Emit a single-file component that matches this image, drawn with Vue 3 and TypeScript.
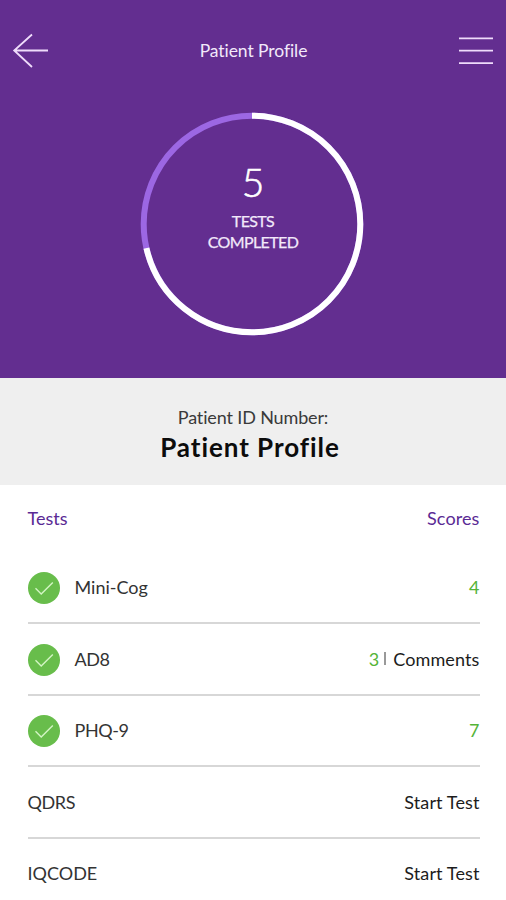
<script setup lang="ts">
interface TestRow {
  id: string
  name: string
  score?: number
  comments?: boolean
}

const tests: TestRow[] = [
  { id: 'minicog', name: 'Mini-Cog', score: 4 },
  { id: 'ad8', name: 'AD8', score: 3, comments: true },
  { id: 'phq', name: 'PHQ-9', score: 7 },
  { id: 'qdrs', name: 'QDRS' },
  { id: 'iqcode', name: 'IQCODE' },
]
</script>

<template>
  <main class="screen">
    <section class="hero">
      <header class="bar">
        <svg class="back" width="36" height="36" viewBox="0 0 36 36">
          <path d="M20 1.5 2.2 17.5 20 34M2.2 17.5H36" />
        </svg>
        <h1 class="bar-title">Patient Profile</h1>
        <svg class="menu" width="34" height="30" viewBox="0 0 34 30">
          <path d="M0 2.3H34M0 14.6H34M0 27.2H34" />
        </svg>
      </header>
      <div class="ring">
        <svg class="ring-art" width="224" height="224" viewBox="0 0 224 224">
          <circle class="track" cx="112" cy="112" r="108.3" />
          <circle class="done" cx="112" cy="112" r="108.3" pathLength="7" stroke-dasharray="5 2" transform="rotate(-90 112 112)" />
        </svg>
        <div class="ring-text">
          <span class="count">5</span>
          <span class="caption">TESTS</span>
          <span class="caption">COMPLETED</span>
        </div>
      </div>
    </section>

    <section class="patient">
      <p class="patient-label">Patient ID Number:</p>
      <p class="patient-name">Patient Profile</p>
    </section>

    <section class="list">
      <div class="head">
        <span>Tests</span>
        <span class="head-scores">Scores</span>
      </div>
      <div v-for="t in tests" :key="t.id" class="row">
        <svg v-if="t.score !== undefined" class="check" width="32" height="32" viewBox="0 0 32 32">
          <circle cx="16" cy="16" r="16" />
          <path d="M7.5 16.3 13.2 22 24.8 10.6" />
        </svg>
        <span :class="['name', t.id]">{{ t.name }}</span>
        <span class="result">
          <span v-if="t.score !== undefined" class="score">{{ t.score }}</span>
          <template v-if="t.comments">
            <span class="divider"></span>
            <span class="comments">Comments</span>
          </template>
          <span v-if="t.score === undefined" class="start">Start Test</span>
        </span>
      </div>
    </section>
  </main>
</template>

<style>
body {
  margin: 0;
  background: #fff;
}
</style>

<style scoped>
.screen {
  width: 506px;
  height: 900px;
  overflow: hidden;
  background: #fff;
  color: #1c1c1c;
  font-family: Lato, "Liberation Sans", sans-serif;
  font-size: 18px;
  line-height: 22px;
  font-variant-ligatures: none;
}
h1,
p {
  margin: 0;
  font-weight: 400;
}
svg {
  display: block;
  flex: none;
}
.hero {
  height: 378px;
  background: #632e90;
  color: #f2e9fa;
}
.bar {
  display: flex;
  align-items: center;
  justify-content: space-between;
  height: 102px;
  padding: 0 13px 0 12px;
  box-sizing: border-box;
}
.back,
.menu {
  fill: none;
  stroke: #efdcfb;
  stroke-width: 1.8;
}
.bar-title {
  font-size: 17.5px;
  letter-spacing: -0.07px;
}
.ring {
  display: grid;
  width: 224px;
  height: 224px;
  margin: 10px 0 0 140px;
}
.ring-art,
.ring-text {
  grid-area: 1 / 1;
}
.ring-art {
  fill: none;
  stroke-width: 6;
}
.track {
  stroke: #9c67e3;
}
.done {
  stroke: #fff;
}
.ring-text {
  display: flex;
  flex-direction: column;
  align-items: center;
  padding: 48px 0 0 2px;
}
.count {
  font-size: 39px;
  line-height: 44px;
  font-weight: 300;
  -webkit-text-stroke: 0.6px #fff;
  color: #fff;
  margin-bottom: 6px;
}
.caption {
  font-size: 16px;
  line-height: 21px;
  letter-spacing: -0.62px;
  -webkit-text-stroke: 0.25px currentColor;
}
.patient {
  display: flex;
  flex-direction: column;
  align-items: center;
  height: 107px;
  padding-top: 28px;
  box-sizing: border-box;
  background: #efefef;
}
.patient-label {
  color: #3a3a3a;
  letter-spacing: -0.14px;
}
.patient-name {
  margin: 1px 6px 0 0;
  font-size: 26px;
  line-height: 36px;
  font-weight: 700;
  letter-spacing: 0.94px;
  color: #0c0c0c;
}
.list {
  padding: 0 26.5px 0 27.5px;
}
.head {
  display: flex;
  justify-content: space-between;
  height: 67.5px;
  padding-top: 22px;
  box-sizing: border-box;
  color: #5a2a94;
}
.head-scores {
  letter-spacing: 0.1px;
}
.row {
  display: flex;
  align-items: center;
  height: 71.5px;
  box-sizing: border-box;
  border-bottom: 2px solid #d7d7d7;
}
.row:last-child {
  height: 68.5px;
  border-bottom: 0;
}
.check {
  margin: 2px 15px 0 0;
}
.check circle {
  fill: #68bd4b;
}
.check path {
  fill: none;
  stroke: #d3f5c4;
  stroke-width: 1.4;
}
.name {
  color: #333;
}
.ad8,
.phq,
.qdrs {
  letter-spacing: -0.4px;
}
.result {
  display: flex;
  align-items: center;
  margin-left: auto;
}
.score {
  color: #55b437;
}
.divider {
  width: 2px;
  height: 13px;
  margin: 0 7px 0 5px;
  background: #999;
}
.comments,
.start {
  letter-spacing: 0.12px;
}
</style>
